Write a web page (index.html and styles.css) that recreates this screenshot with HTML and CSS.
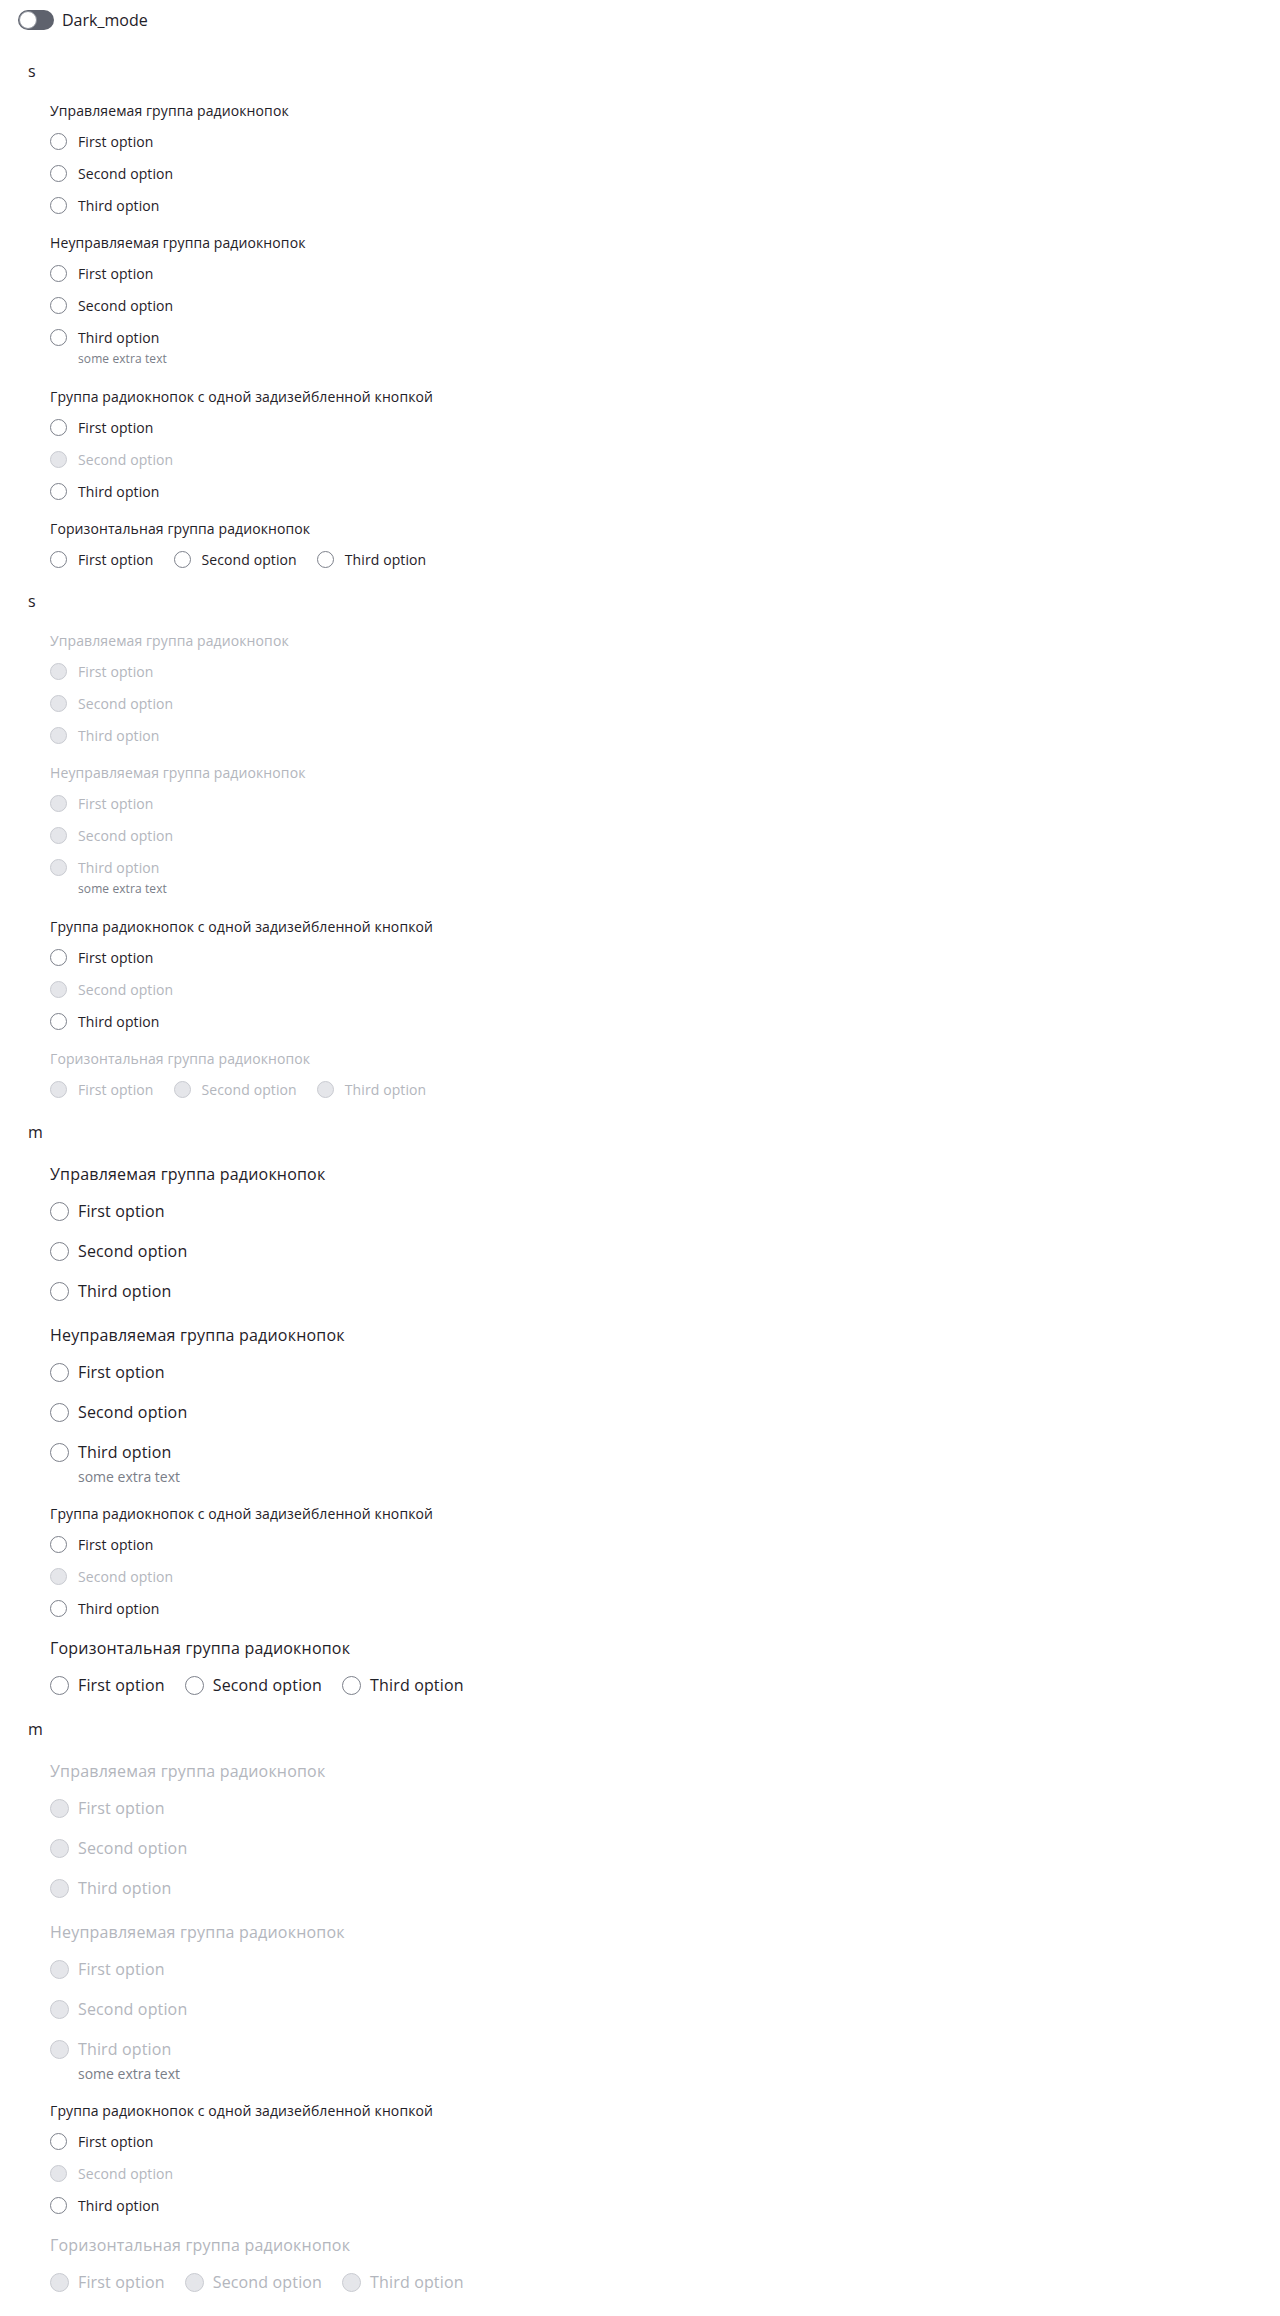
FILE: index.html
```html
<!DOCTYPE html>
<html lang="ru">
<head>
<meta charset="utf-8">
<title>Radio</title>
<link rel="stylesheet" href="styles.css">
</head>
<body>
<div class="page">
  <div class="toggle-row">
    <span class="toggle"><span class="knob"></span></span>
    <span class="toggle-label">Dark_mode</span>
  </div>

  <!-- s enabled -->
  <section class="section">
    <div class="heading">s</div>
    <div class="groups">
      <div class="group s">
        <div class="label">Управляемая группа радиокнопок</div>
        <div class="options">
          <div class="opt"><span class="radio"></span><span class="text">First option</span></div>
          <div class="opt"><span class="radio"></span><span class="text">Second option</span></div>
          <div class="opt"><span class="radio"></span><span class="text">Third option</span></div>
        </div>
      </div>
      <div class="group s">
        <div class="label">Неуправляемая группа радиокнопок</div>
        <div class="options">
          <div class="opt"><span class="radio"></span><span class="text">First option</span></div>
          <div class="opt"><span class="radio"></span><span class="text">Second option</span></div>
          <div class="opt-wrap">
            <div class="opt"><span class="radio"></span><span class="text">Third option</span></div>
            <div class="extra">some extra text</div>
          </div>
        </div>
      </div>
      <div class="group s">
        <div class="label">Группа радиокнопок с одной задизейбленной кнопкой</div>
        <div class="options">
          <div class="opt"><span class="radio"></span><span class="text">First option</span></div>
          <div class="opt disabled"><span class="radio"></span><span class="text">Second option</span></div>
          <div class="opt"><span class="radio"></span><span class="text">Third option</span></div>
        </div>
      </div>
      <div class="group s">
        <div class="label">Горизонтальная группа радиокнопок</div>
        <div class="options row">
          <div class="opt"><span class="radio"></span><span class="text">First option</span></div>
          <div class="opt"><span class="radio"></span><span class="text">Second option</span></div>
          <div class="opt"><span class="radio"></span><span class="text">Third option</span></div>
        </div>
      </div>
    </div>
  </section>

  <!-- s disabled -->
  <section class="section">
    <div class="heading">s</div>
    <div class="groups">
      <div class="group s disabled">
        <div class="label">Управляемая группа радиокнопок</div>
        <div class="options">
          <div class="opt disabled"><span class="radio"></span><span class="text">First option</span></div>
          <div class="opt disabled"><span class="radio"></span><span class="text">Second option</span></div>
          <div class="opt disabled"><span class="radio"></span><span class="text">Third option</span></div>
        </div>
      </div>
      <div class="group s disabled">
        <div class="label">Неуправляемая группа радиокнопок</div>
        <div class="options">
          <div class="opt disabled"><span class="radio"></span><span class="text">First option</span></div>
          <div class="opt disabled"><span class="radio"></span><span class="text">Second option</span></div>
          <div class="opt-wrap">
            <div class="opt disabled"><span class="radio"></span><span class="text">Third option</span></div>
            <div class="extra">some extra text</div>
          </div>
        </div>
      </div>
      <div class="group s">
        <div class="label">Группа радиокнопок с одной задизейбленной кнопкой</div>
        <div class="options">
          <div class="opt"><span class="radio"></span><span class="text">First option</span></div>
          <div class="opt disabled"><span class="radio"></span><span class="text">Second option</span></div>
          <div class="opt"><span class="radio"></span><span class="text">Third option</span></div>
        </div>
      </div>
      <div class="group s disabled">
        <div class="label">Горизонтальная группа радиокнопок</div>
        <div class="options row">
          <div class="opt disabled"><span class="radio"></span><span class="text">First option</span></div>
          <div class="opt disabled"><span class="radio"></span><span class="text">Second option</span></div>
          <div class="opt disabled"><span class="radio"></span><span class="text">Third option</span></div>
        </div>
      </div>
    </div>
  </section>

  <!-- m enabled -->
  <section class="section m-section">
    <div class="heading">m</div>
    <div class="groups">
      <div class="group m">
        <div class="label">Управляемая группа радиокнопок</div>
        <div class="options">
          <div class="opt"><span class="radio"></span><span class="text">First option</span></div>
          <div class="opt"><span class="radio"></span><span class="text">Second option</span></div>
          <div class="opt"><span class="radio"></span><span class="text">Third option</span></div>
        </div>
      </div>
      <div class="group m">
        <div class="label">Неуправляемая группа радиокнопок</div>
        <div class="options">
          <div class="opt"><span class="radio"></span><span class="text">First option</span></div>
          <div class="opt"><span class="radio"></span><span class="text">Second option</span></div>
          <div class="opt-wrap">
            <div class="opt"><span class="radio"></span><span class="text">Third option</span></div>
            <div class="extra">some extra text</div>
          </div>
        </div>
      </div>
      <div class="group s">
        <div class="label">Группа радиокнопок с одной задизейбленной кнопкой</div>
        <div class="options">
          <div class="opt"><span class="radio"></span><span class="text">First option</span></div>
          <div class="opt disabled"><span class="radio"></span><span class="text">Second option</span></div>
          <div class="opt"><span class="radio"></span><span class="text">Third option</span></div>
        </div>
      </div>
      <div class="group m">
        <div class="label">Горизонтальная группа радиокнопок</div>
        <div class="options row">
          <div class="opt"><span class="radio"></span><span class="text">First option</span></div>
          <div class="opt"><span class="radio"></span><span class="text">Second option</span></div>
          <div class="opt"><span class="radio"></span><span class="text">Third option</span></div>
        </div>
      </div>
    </div>
  </section>

  <!-- m disabled -->
  <section class="section m-section">
    <div class="heading">m</div>
    <div class="groups">
      <div class="group m disabled">
        <div class="label">Управляемая группа радиокнопок</div>
        <div class="options">
          <div class="opt disabled"><span class="radio"></span><span class="text">First option</span></div>
          <div class="opt disabled"><span class="radio"></span><span class="text">Second option</span></div>
          <div class="opt disabled"><span class="radio"></span><span class="text">Third option</span></div>
        </div>
      </div>
      <div class="group m disabled">
        <div class="label">Неуправляемая группа радиокнопок</div>
        <div class="options">
          <div class="opt disabled"><span class="radio"></span><span class="text">First option</span></div>
          <div class="opt disabled"><span class="radio"></span><span class="text">Second option</span></div>
          <div class="opt-wrap">
            <div class="opt disabled"><span class="radio"></span><span class="text">Third option</span></div>
            <div class="extra">some extra text</div>
          </div>
        </div>
      </div>
      <div class="group s">
        <div class="label">Группа радиокнопок с одной задизейбленной кнопкой</div>
        <div class="options">
          <div class="opt"><span class="radio"></span><span class="text">First option</span></div>
          <div class="opt disabled"><span class="radio"></span><span class="text">Second option</span></div>
          <div class="opt"><span class="radio"></span><span class="text">Third option</span></div>
        </div>
      </div>
      <div class="group m disabled">
        <div class="label">Горизонтальная группа радиокнопок</div>
        <div class="options row">
          <div class="opt disabled"><span class="radio"></span><span class="text">First option</span></div>
          <div class="opt disabled"><span class="radio"></span><span class="text">Second option</span></div>
          <div class="opt disabled"><span class="radio"></span><span class="text">Third option</span></div>
        </div>
      </div>
    </div>
  </section>
</div>
</body>
</html>
```

FILE: styles.css
```css
* { box-sizing: border-box; }

html, body {
  margin: 0;
  padding: 0;
  background: #ffffff;
}

body {
  font-family: "Open Sans", "Noto Sans", sans-serif;
  color: #1f2128;
}

.page {
  padding: 10px 18px 20px;
  display: flex;
  flex-direction: column;
}

.toggle-row {
  display: flex;
  align-items: center;
  gap: 8px;
  height: 20px;
  margin-bottom: 29px;
}

.toggle {
  width: 36px;
  height: 20px;
  border-radius: 10px;
  background: #5e626d;
  display: flex;
  align-items: center;
  padding: 1px;
}

.knob {
  width: 18px;
  height: 18px;
  border-radius: 50%;
  background: #ffffff;
  border: 1px solid #8e929b;
}

.toggle-label {
  font-size: 16px;
  line-height: 20px;
}

.section {
  padding-left: 10px;
  margin-bottom: 18px;
}

.section + .section {
  margin-bottom: 19px;
}

.section.m-section {
  margin-bottom: 16px;
}

.heading {
  font-size: 16px;
  line-height: 24px;
  margin-bottom: 18px;
}

.groups {
  padding-left: 22px;
  display: flex;
  flex-direction: column;
  gap: 16px;
}

.options {
  display: flex;
  flex-direction: column;
  gap: 8px;
}

.options.row {
  flex-direction: row;
  gap: 20px;
}

.opt {
  display: flex;
  align-items: center;
}

.radio {
  flex: none;
  border-radius: 50%;
  border: 1px solid #7d818b;
  background: #ffffff;
}

.text {
  white-space: nowrap;
}

.extra {
  color: #7a7e88;
  padding-bottom: 4px;
}

/* size s */
.group.s .label {
  font-size: 14px;
  line-height: 20px;
  letter-spacing: 0.1px;
  margin-bottom: 8px;
}
.group.s .opt { height: 24px; }
.group.s .radio { width: 17px; height: 17px; margin-right: 11px; }
.group.s .text { font-size: 14px; letter-spacing: 0.1px; }
.group.s .extra { font-size: 12px; line-height: 16px; padding-left: 28px; margin-top: 2px; letter-spacing: 0.1px; }

/* size m */
.group.m .label {
  font-size: 16px;
  line-height: 24px;
  letter-spacing: 0.2px;
  margin-bottom: 9px;
}
.group.m .opt { height: 32px; }
.group.m .radio { width: 19px; height: 19px; margin-right: 9px; }
.group.m .text { font-size: 16px; letter-spacing: 0.15px; }
.group.m .extra { font-size: 14px; line-height: 18px; padding-left: 28px; margin-top: 0; padding-bottom: 2px; }

/* disabled */
.group.disabled .label { color: #b3b6bd; }
.opt.disabled .text { color: #b3b6bd; }
.opt.disabled .radio {
  background: #e5e6ea;
  border-color: #c9cbd1;
}
```
